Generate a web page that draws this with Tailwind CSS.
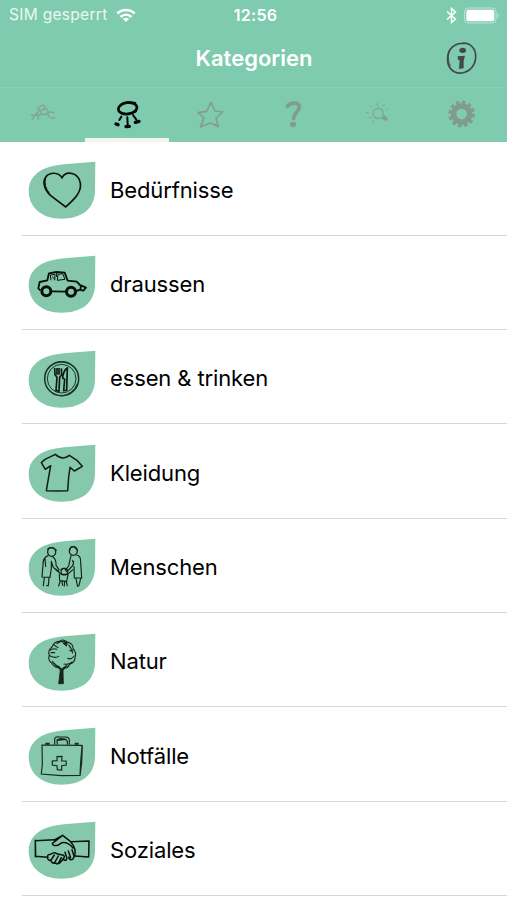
<!DOCTYPE html>
<html lang="de">
<head>
<meta charset="utf-8">
<title>Kategorien</title>
<script src="https://cdn.jsdelivr.net/npm/@tailwindcss/browser@4"></script>
</head>
<body class="w-[507px] h-[900px] overflow-hidden bg-white font-['Inter','Liberation_Sans',sans-serif] text-black">
<svg class="hidden"><defs><path id="leaf" d="M241 35L165 41C140 43 120 45 105 50C66 61 41 86 41 122C41 170 78 206 140 206C200 206 240 177 240 120Z" fill="#85c8ac"/></defs></svg>
<header class="bg-[#7ecbb0] text-white h-[141.5px] flex flex-col">
  <div class="h-[30px] grid grid-cols-3 items-center pl-[9px] pr-[7px] text-[16px]">
    <div class="flex items-center gap-[8px] whitespace-nowrap"><span class="text-[15.5px] tracking-[0.3px] text-white/85">SIM gesperrt</span>
      <svg class="w-[20px] h-[15px]" viewBox="0 0 20 15" fill="none" stroke="#fff" stroke-width="2.6"><path d="M1.3 5.5C6 .8 14 .8 18.7 5.5M4.6 9C7.8 6 12.2 6 15.4 9"/><path d="M10 14L6.9 10.9Q10 8.4 13.1 10.9Z" fill="#fff" stroke="none"/></svg></div>
    <div class="text-center font-semibold tracking-[0.3px] text-[16px] pl-[2px]">12:56</div>
    <div class="flex justify-end items-center gap-[7px]">
      <svg class="w-[11px] h-[17px]" viewBox="0 0 11 17" fill="none" stroke="#fff" stroke-width="1.5"><path d="M1 4.5L9.5 12L5.500 15.500V1.500L9.500 5L1 12.500"/></svg>
      <svg class="w-[36px] h-[17px]" viewBox="0 0 36 17"><rect x=".6" y="1" width="31.5" height="15" rx="4" fill="none" stroke="#fff" stroke-opacity=".5"/><rect x="2.3" y="2.8" width="28" height="11.4" rx="2.2" fill="#fff"/><path d="M33.500 6Q36 8.500 33.500 11Z" fill="#fff" opacity=".5"/></svg>
    </div>
  </div>
  <div class="h-[58px] grid grid-cols-[1fr_120px_1fr] items-center border-b border-[#8ad0b7]">
    <div></div>
    <h1 class="text-center whitespace-nowrap font-semibold text-[22px] pl-px -mt-px">Kategorien</h1>
    <div class="flex justify-end pr-[28px] -mt-[2px]">
      <svg class="w-[34px] h-[34px]" viewBox="0 0 102 102" fill="none" stroke="#45474a" stroke-width="5"><path d="M50 7C76 3 94 24 92 49C91 74 73 94 49 96C22 98 5 77 8 48C10 20 33 5 60 7"/><path d="M20 20C8 34 7 58 16 74M60 92C75 90 87 76 91 58" stroke-width="3"/><ellipse cx="53" cy="28" rx="10" ry="8" fill="#45474a" stroke="none"/><path d="M38 46L60 44L56 59L56 82L42 84L44 58L39 56Z" fill="#45474a" stroke="none"/></svg>
    </div>
  </div>
  <nav class="grid grid-cols-6 h-[53.5px]">
    <div class="flex flex-col"><svg class="w-[84px] h-[50px]" viewBox="0 264 252 150" fill="none" stroke="#84a394" stroke-width="4" stroke-linecap="round"><path d="M97 357L113 336L115 357M94 345Q108 348 124 343M113 324L127 343M115 323Q133 309 135 321Q132 329 122 331Q142 322 145 334Q144 344 127 343M162 338Q143 332 144 345Q146 357 164 354"/></svg></div>
    <div class="flex flex-col justify-between"><svg class="w-[84px] h-[49px]" viewBox="253 264 252 147" fill="none" stroke="#050807" stroke-width="8" stroke-linecap="round"><ellipse cx="381" cy="325" rx="28" ry="17" transform="rotate(-8 381 325)"/><path d="M362 312Q375 303 404 309M356 335Q376 350 406 334M362 350L356 360M380 352L381 374M397 345L407 359" stroke-width="6"/><path d="M346 372L352 374M376 380L386 379M404 367L415 364" stroke-width="10"/></svg><div class="h-[4px] bg-[#f4f5ef]"></div></div>
    <div class="flex flex-col"><svg class="w-[84px] h-[50px]" viewBox="507 264 252 150" fill="none" stroke="#849d92" stroke-width="5" stroke-linejoin="round"><path d="M633 307L645 333L668 336L648 354L655 380L631 369L601 381L612 354L594 338L620 334Z"/><path d="M625 325L632 307M612 352L604 376M644 370L654 376" stroke-width="3"/></svg></div>
    <div class="flex flex-col"><svg class="w-[84px] h-[50px]" viewBox="3 264 252 150" fill="none" stroke="#819b8e" stroke-linecap="round"><path d="M103 319C109 308 137 304 139 319C140 334 123 337 122 355" stroke-width="11"/><ellipse cx="120" cy="373" rx="9" ry="8" fill="#819b8e" stroke="none"/></svg></div>
    <div class="flex flex-col"><svg class="w-[84px] h-[50px]" viewBox="255 264 252 150" fill="none" stroke="#83a696" stroke-width="4" stroke-linecap="round"><path d="M386 351C374 361 359 353 360 338C362 322 384 321 389 333C391 339 389 344 393 349"/><path d="M387 352L396 347L403 357L400 362L389 357Z" fill="#819b8e"/><path d="M373 309L374 318M352 317L357 322M395 312L390 318M346 338L340 337M401 330L405 328M356 351L347 354M363 360L359 370" stroke-width="3"/></svg></div>
    <div class="flex flex-col"><svg class="w-[84px] h-[50px]" viewBox="516 264 252 150"><g fill="none" stroke="#819b8e"><circle cx="632" cy="342" r="24" stroke-width="16"/><circle cx="632" cy="342" r="35" stroke-width="10" stroke-dasharray="10.500 7.826"/></g></svg></div>
  </nav>
</header>
<main class="text-[22px] tracking-[-0.13px]">
  <section class="h-[94.33px] pl-[15px] flex items-center relative"><svg class="w-[95px] h-[80px] shrink-0 mt-[3px]" viewBox="0 0 285 240"><use href="#leaf"/><path d="M141 83C129 66 105 66 93 80C79 99 92 126 111 140L152 171C176 149 201 127 196 99C190 66 153 61 141 83Z" fill="none" stroke="#09110d" stroke-width="5"/><path d="M92 84Q85 107 104 131" stroke="#09110d" stroke-width="3" fill="none"/></svg><span class="pt-[3px]">Bedürfnisse</span><i class="absolute left-[22px] right-0 bottom-0 h-px bg-[#d8d8d8]"></i></section>

  <section class="h-[94.33px] pl-[15px] flex items-center relative"><svg class="w-[95px] h-[80px] shrink-0 mt-[3px]" viewBox="0 0 285 240"><use href="#leaf"/><g transform="translate(0 2)" fill="none" stroke="#08100c" stroke-width="5.500" stroke-linejoin="round"><path d="M76 137L70 131L74 112L97 107L102 86L124 82L149 84L158 108L185 111L198 124L196 135L183 139M111 140L152 141M198 122L213 129L205 138L197 136"/><circle cx="94" cy="140" r="13.500" stroke-width="9"/><circle cx="168" cy="141" r="13.500" stroke-width="9"/><path d="M108 107L106 91L120 89L119 107M127 107L129 89L143 87L150 104L127 107M113 96L116 102M125 83L125 97" stroke-width="3"/></g></svg><span class="pt-[3px]">draussen</span><i class="absolute left-[22px] right-0 bottom-0 h-px bg-[#d8d8d8]"></i></section>

  <section class="h-[94.33px] pl-[15px] flex items-center relative"><svg class="w-[95px] h-[80px] shrink-0 mt-[3px]" viewBox="0 0 285 240"><use href="#leaf"/><g transform="translate(0 4)" fill="none" stroke="#1b3228" stroke-width="3"><circle cx="140" cy="115" r="51" stroke-width="4.500"/><circle cx="140" cy="115" r="43" stroke-width="3"/><path d="M96 90Q118 56 159 68M187 130Q174 162 139 167"/><path d="M119 83L120 103L126 111L123 151L132 152L134 111L140 103L139 84M126 83V103M132 83V103M157 83L155 150L146 151L149 117L143 113Q145 90 157 83Z" stroke="#0e1a14" stroke-width="5"/></g></svg><span class="pt-[3px]">essen &amp; trinken</span><i class="absolute left-[22px] right-0 bottom-0 h-px bg-[#d8d8d8]"></i></section>

  <section class="h-[94.33px] pl-[15px] flex items-center relative"><svg class="w-[95px] h-[80px] shrink-0 mt-[3px]" viewBox="0 0 285 240"><use href="#leaf"/><path d="M121 64L90 79L79 89L91 109L107 98L101 132L94 173L128 174L158 173L161 132L165 103L178 114L202 100L187 83L163 67Q143 84 121 64Z" fill="none" stroke="#111c17" stroke-width="4.500" stroke-linejoin="round"/></svg><span class="pt-[3px]">Kleidung</span><i class="absolute left-[22px] right-0 bottom-0 h-px bg-[#d8d8d8]"></i></section>

  <section class="h-[94.33px] pl-[15px] flex items-center relative"><svg class="w-[95px] h-[80px] shrink-0 mt-[3px]" viewBox="0 0 285 240"><use href="#leaf"/><g transform="translate(0 2)" fill="none" stroke="#142219" stroke-width="3.500" stroke-linecap="round"><ellipse cx="110" cy="73" rx="12" ry="13" stroke-width="4"/><ellipse cx="175" cy="70" rx="12" ry="13" stroke-width="4"/><path d="M98 65Q102 57 115 61L124 68M99 84Q83 90 84 113L81 148L105 149L109 121L109 101M113 87Q124 94 123 113L132 126L129 132L115 119L109 101M90 93L92 116M88 150L85 174M102 150L100 174L95 174M168 84L161 115L151 127L156 132L173 114L176 102M185 82Q198 84 197 104L200 151L178 151L177 117M173 98L176 110M183 152L187 173M197 152L192 174L187 176M165 66Q165 56 177 57L187 67"/><circle cx="148" cy="132" r="10"/><path d="M138 126Q145 118 157 126M122 124L139 140L157 140L174 126M133 140L134 159L155 161L159 141M136 160L131 175M141 162L143 173M149 162L148 175M154 162L157 174"/></g></svg><span class="pt-[3px]">Menschen</span><i class="absolute left-[22px] right-0 bottom-0 h-px bg-[#d8d8d8]"></i></section>

  <section class="h-[94.33px] pl-[15px] flex items-center relative"><svg class="w-[95px] h-[80px] shrink-0 mt-[3px]" viewBox="0 0 285 240"><use href="#leaf"/><g transform="translate(0 1)" fill="none" stroke="#16251d" stroke-width="3.300" stroke-linecap="round"><path d="M133 136Q117 136 110 122Q98 115 103 98Q97 84 111 74Q117 58 133 57Q143 48 156 59Q176 64 174 79Q186 91 180 105Q181 120 164 126Q158 140 147 136"/><path d="M126 64Q140 52 154 61M105 84Q115 76 125 81M104 100Q122 109 131 102M112 117Q120 131 132 133M176 81Q170 88 164 84M178 101Q168 113 158 108M172 119Q162 128 147 125M117 68L129 76M161 68Q168 75 173 92M108 91L119 91M121 126L113 119"/><path d="M145 62L157 60L154 70Z" fill="#16251d"/><path d="M119 125L136 143L131 184L145 184L144 145L157 127L141 139Z" fill="#16251d" stroke-width="2.500"/></g></svg><span class="pt-[3px]">Natur</span><i class="absolute left-[22px] right-0 bottom-0 h-px bg-[#d8d8d8]"></i></section>

  <section class="h-[94.33px] pl-[15px] flex items-center relative"><svg class="w-[95px] h-[80px] shrink-0 mt-[3px]" viewBox="0 0 285 240"><use href="#leaf"/><g fill="none" stroke="#19271f" stroke-width="3.500"><path d="M81 87L198 88L201 91L197 137L195 178L138 179L79 174L82 145ZM202 87L200 141L195 180"/><path d="M119 86L119 68Q121 62 132 63H153Q162 64 163 72V86M127 86L126 73L153 70L157 76V86M126 71Q144 63 157 74"/><path d="M91 83H104M179 83H191" stroke-width="6"/><path d="M126 122L141 121L140 135L153 135L154 147L140 149V162L127 161L126 149L112 147V135L126 134Z"/></g></svg><span class="pt-[3px]">Notfälle</span><i class="absolute left-[22px] right-0 bottom-0 h-px bg-[#d8d8d8]"></i></section>

  <section class="h-[94.33px] pl-[15px] flex items-center relative"><svg class="w-[95px] h-[80px] shrink-0 mt-[3px]" viewBox="0 0 285 240"><use href="#leaf"/><g transform="translate(0 -1)" fill="none" stroke="#0b120f" stroke-width="4.500" stroke-linejoin="round" stroke-linecap="round"><path d="M118 90L61 93L62 140L98 143M61 92V141M168 96L222 94L221 142L179 139"/><path d="M118 91L143 77L167 96Q185 117 179 138L173 149Q164 153 161 143M143 77L112 101Q114 111 130 106L141 99Q160 97 174 115M98 142Q96 134 107 134Q118 126 125 132L146 137Q151 142 144 147M98 142Q96 152 108 153Q111 162 121 160Q132 166 138 156L146 146M108 151L118 136M119 159L130 139M130 161L139 144M150 128L155 143Q157 153 148 152L145 147M160 124L167 144M171 120L177 139"/></g></svg><span class="pt-[3px]">Soziales</span><i class="absolute left-[22px] right-0 bottom-0 h-px bg-[#d8d8d8]"></i></section>
</main>
</body>
</html>
